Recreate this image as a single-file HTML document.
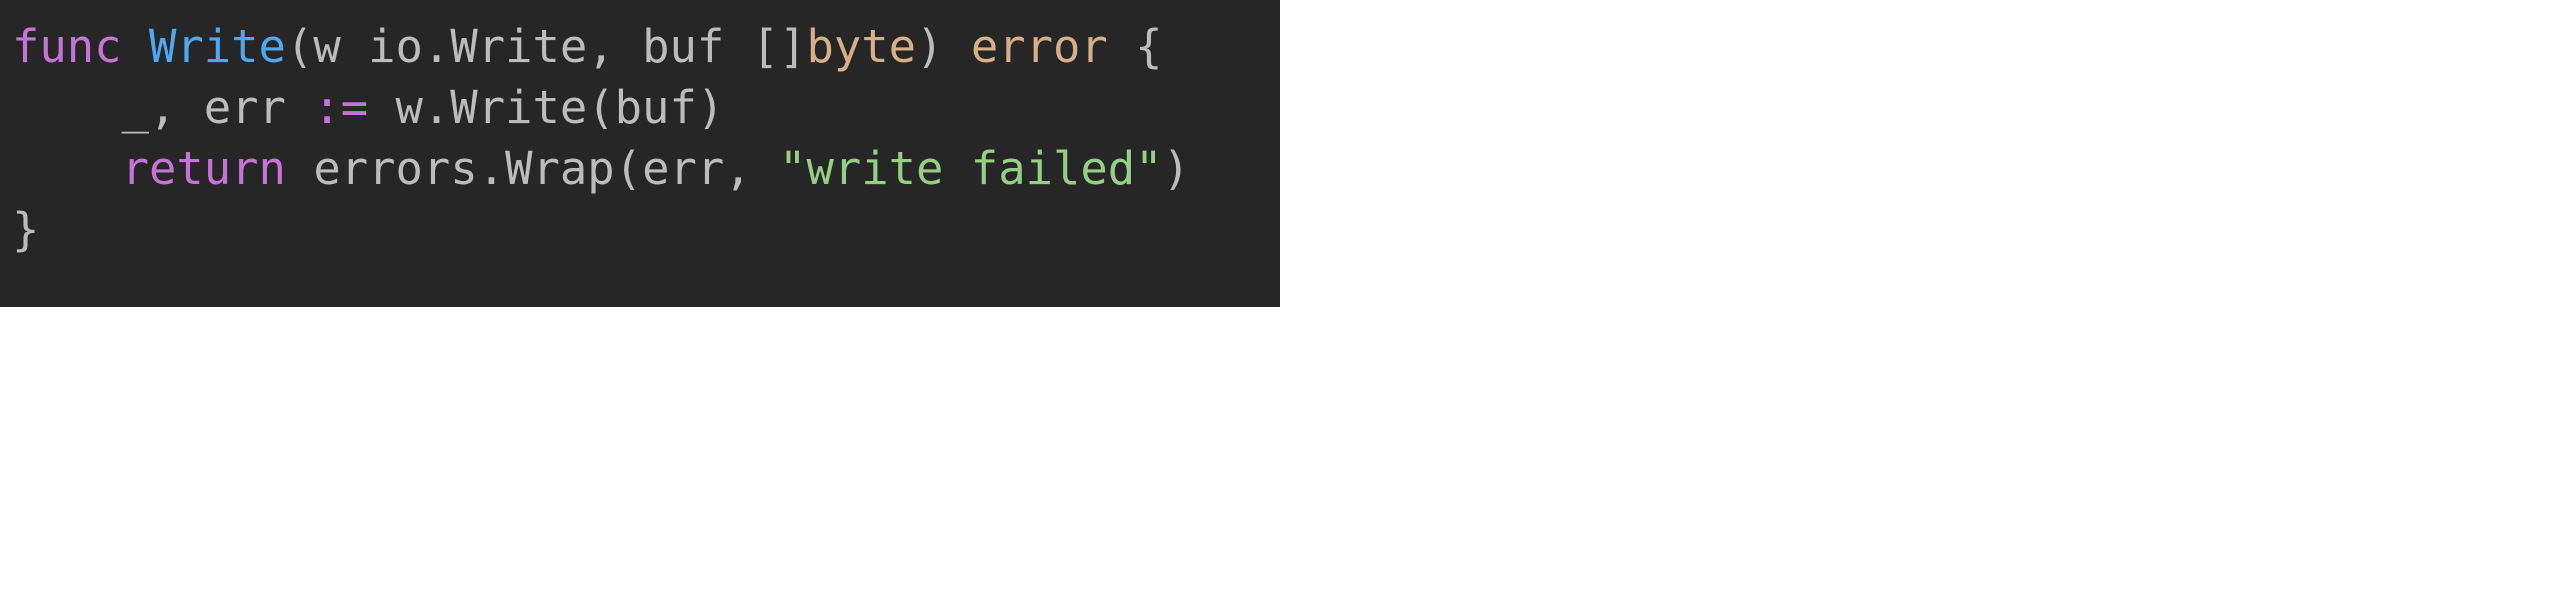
<!DOCTYPE html>
<html><head><style>
html,body{margin:0;padding:0;background:#fff;width:2560px;height:615px;overflow:hidden}
.box{position:absolute;left:0;top:0;width:1280px;height:307px;background:#262626}
pre{position:absolute;left:12px;top:16px;margin:0;font-family:"DejaVu Sans Mono","Liberation Mono",monospace;font-size:45.5px;line-height:61px;color:#bcbcbc}
.k{color:#c474d6}.f{color:#4ea8f0}.t{color:#d6ae87}.s{color:#94cf84}
</style></head><body>
<div class="box"></div>
<pre><span class="k">func</span> <span class="f">Write</span>(w io.Write, buf []<span class="t">byte</span>) <span class="t">error</span> {
    _, err <span class="k">:=</span> w.Write(buf)
    <span class="k">return</span> errors.Wrap(err, <span class="s">"write failed"</span>)
}</pre>
</body></html>
